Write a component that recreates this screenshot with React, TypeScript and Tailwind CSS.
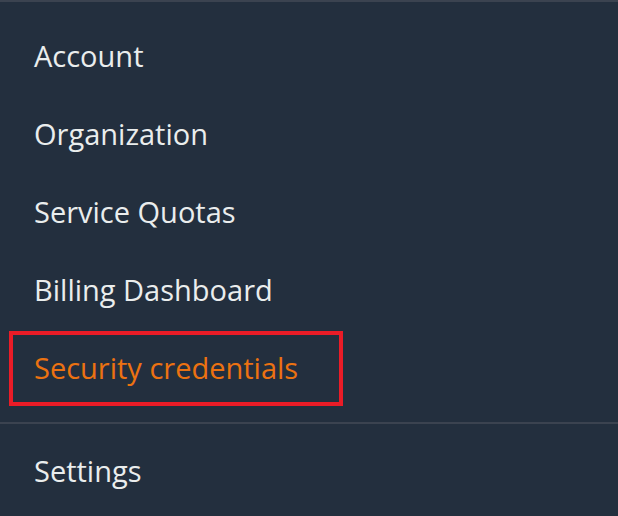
const items = ['Account', 'Organization', 'Service Quotas', 'Billing Dashboard'];

export default function App() {
  return (
    <div
      className="min-h-screen w-full bg-[#232f3e] border-t-2 border-[#3b4350]"
      style={{ fontFamily: '"Open Sans", "Noto Sans", sans-serif' }}
    >
      <ul className="pt-[15px]">
        {items.map((label) => (
          <li key={label} className="h-[78px] flex items-center pl-[34px] text-[29px] text-[#eaeded]">
            {label}
          </li>
        ))}
        <li className="h-[78px] flex items-start">
          <div className="ml-[9px] mt-[2px] w-[334px] h-[75px] border-4 border-[#ea1c27] flex items-center pl-[21px] pb-[2px] text-[29px] text-[#ec7211]">
            Security credentials
          </div>
        </li>
      </ul>
      <div className="mt-[15px] h-[2px] bg-[#3b4350]" />
      <div className="h-[94px] flex items-center pl-[34px] text-[29px] text-[#eaeded]">Settings</div>
    </div>
  );
}
